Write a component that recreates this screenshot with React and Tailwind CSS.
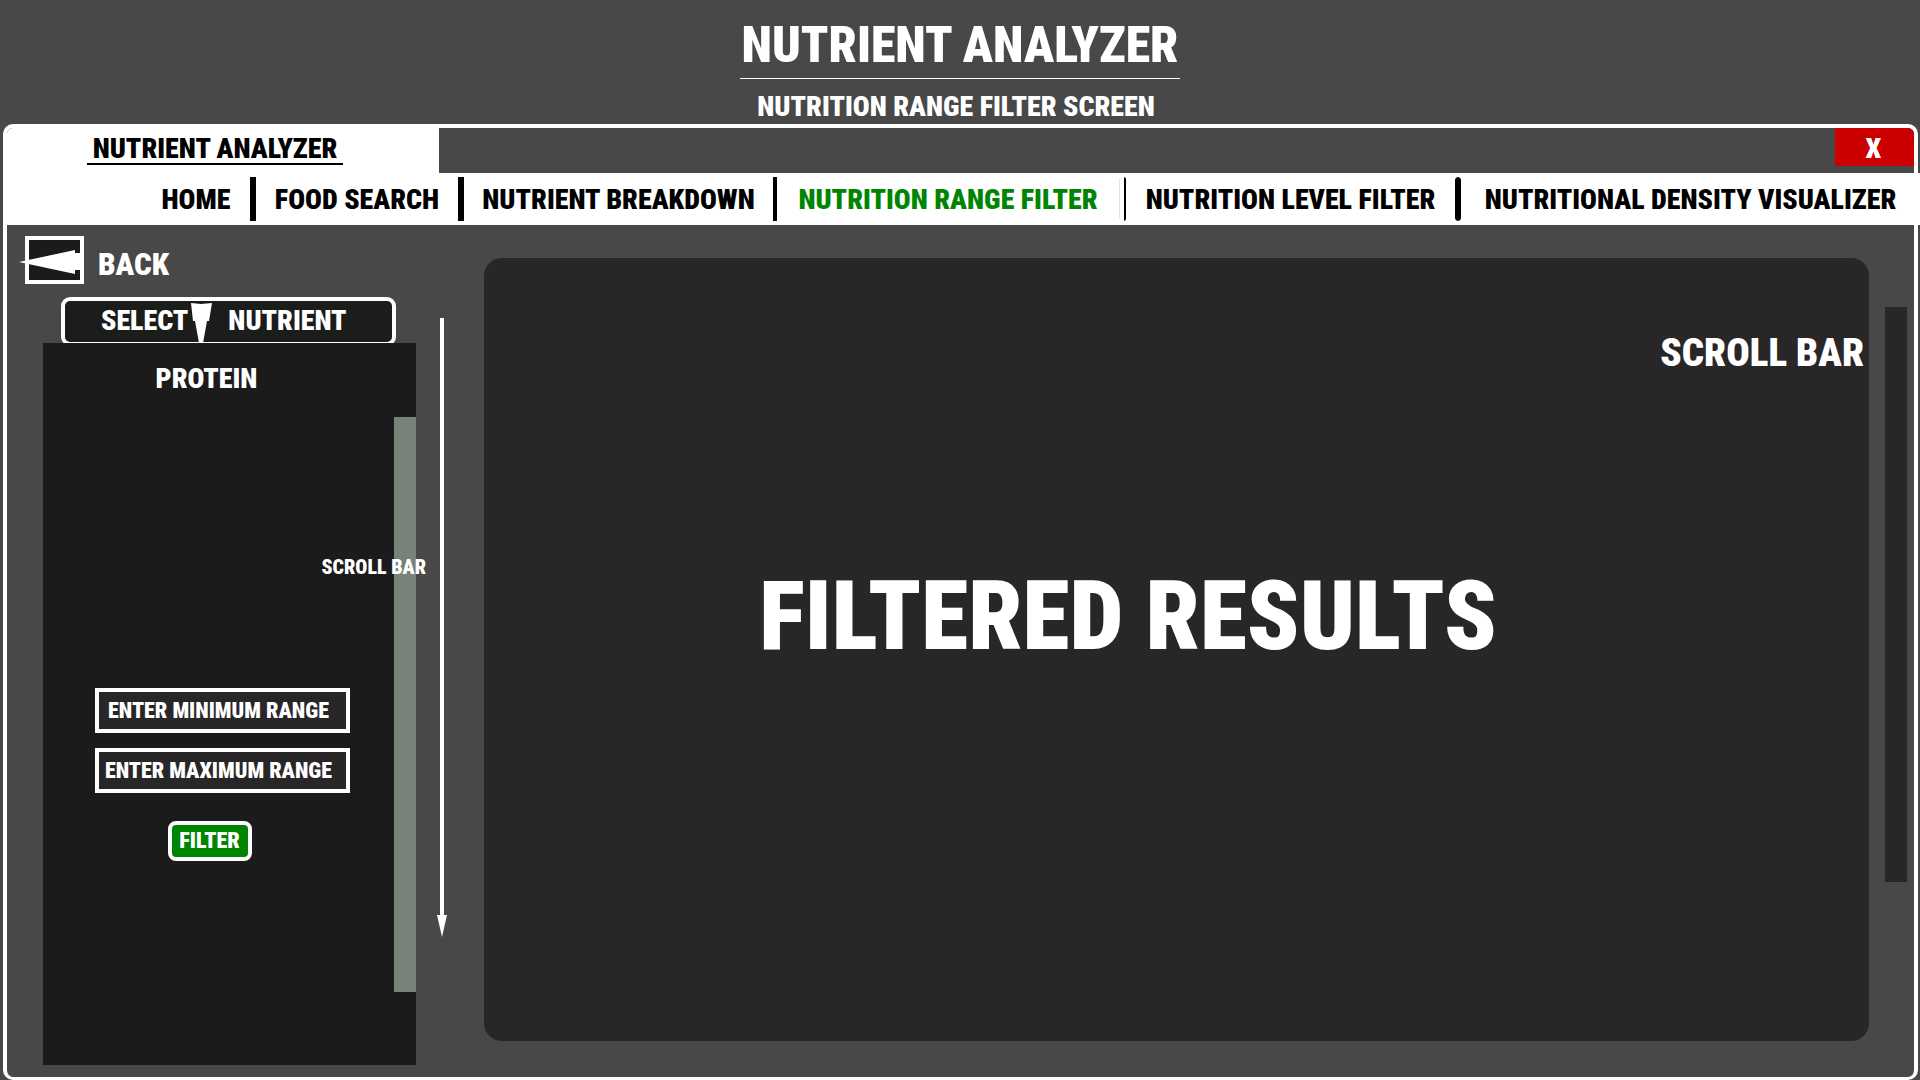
const tabs = [
  { label: "HOME", cell: "flex-[114]", bar: "w-[6px]" },
  { label: "FOOD SEARCH", cell: "flex-[208]", bar: "w-[6px]" },
  { label: "NUTRIENT BREAKDOWN", cell: "flex-[313]", bar: "w-1" },
  { label: "NUTRITION RANGE FILTER", cell: "flex-[349]", bar: "w-[2px] rounded-r-sm", active: true },
  { label: "NUTRITION LEVEL FILTER", cell: "flex-[335]", bar: "w-[6px] rounded-full" },
  { label: "NUTRITIONAL DENSITY VISUALIZER", cell: "flex-[459]" },
];

function PageHeader() {
  return (
    <header className="flex h-[124px] flex-col items-center pt-4">
      <h1 className="border-b border-white px-[2px] pb-1 text-[50px] leading-[58px]">NUTRIENT ANALYZER</h1>
      <h2 className="mt-3 pr-2 text-[28px] leading-8">NUTRITION RANGE FILTER SCREEN</h2>
    </header>
  );
}

function TitleBar() {
  return (
    <div className="flex h-[45px] items-start justify-between">
      <div className="flex h-full w-[432px] justify-center rounded-tl-md bg-white pr-4 pt-[6px] text-black">
        <span className="h-[31px] border-b-2 border-black px-[6px] text-[28px] leading-[29px]">NUTRIENT ANALYZER</span>
      </div>
      <button type="button" aria-label="Close" className="h-[38px] w-[79px] rounded-tr-md bg-[#cc0000] pr-[2px] pt-1 text-[28px] leading-8">
        X
      </button>
    </div>
  );
}

function Navigation() {
  return (
    <nav className="relative -mr-[6px] flex h-[52px] items-center bg-white pl-[135px] text-[28px] text-black">
      {tabs.map((tab) => (
        <div key={tab.label} className={`flex min-w-0 items-center ${tab.cell}`}>
          <a
            href="#"
            aria-current={tab.active ? "page" : undefined}
            className={`flex-1 whitespace-nowrap pt-[2px] text-center ${tab.active ? "text-[#008500]" : ""}`}
          >
            {tab.label}
          </a>
          {tab.active && <span className="mr-[3px] h-10 w-[2px] bg-[#d5ead5]" />}
          {tab.bar && <span className={`h-11 bg-black outline-4 outline-white ${tab.bar}`} />}
        </div>
      ))}
    </nav>
  );
}

function BackButton() {
  return (
    <button type="button" className="mt-[11px] flex h-12 items-start self-start text-[31px]">
      <span className="relative h-12 w-[59px] border-4 border-white bg-[#1b1b1b]">
        <svg className="absolute -left-[10px] top-[9px]" width="62" height="26" viewBox="0 0 62 26" aria-hidden="true">
          <path d="M0 13L56 1V4H61V21H56V25Z" fill="white" />
        </svg>
      </span>
      <span className="ml-[14px] pt-[9px] leading-10">BACK</span>
    </button>
  );
}

function NutrientPanel() {
  return (
    <section className="relative mb-3 ml-[18px] flex flex-1 bg-[#1b1b1b]">
      <div className="flex flex-1 flex-col items-center pt-[18px] pb-[204px]">
        <p className="pr-6 text-[28px] leading-9">PROTEIN</p>
        <form className="mt-auto flex flex-col items-center pl-2" onSubmit={(e) => e.preventDefault()}>
          <input
            aria-label="Enter minimum range"
            placeholder="ENTER MINIMUM RANGE"
            className="h-[45px] w-[255px] border-4 border-white bg-[#282627] pr-2 text-center text-[22px] placeholder:text-white placeholder:opacity-100"
          />
          <input
            aria-label="Enter maximum range"
            placeholder="ENTER MAXIMUM RANGE"
            className="mt-[15px] h-[45px] w-[255px] border-4 border-white bg-[#282627] pr-2 text-center text-[22px] placeholder:text-white placeholder:opacity-100"
          />
          <button type="submit" className="mr-[26px] mt-7 h-10 w-[84px] rounded-lg border-4 border-white bg-[#008500] text-[22px] leading-8">
            FILTER
          </button>
        </form>
      </div>
      <div className="mb-[73px] mt-[74px] w-[22px] bg-[#788278]" />
      <span className="absolute -right-[10px] top-[212px] text-[20px] leading-6">SCROLL BAR</span>
    </section>
  );
}

function Sidebar() {
  return (
    <aside className="flex w-[391px] shrink-0 flex-col">
      <BackButton />
      <button
        type="button"
        aria-haspopup="listbox"
        className="-mb-[3px] ml-9 mt-[13px] flex h-[49px] w-[335px] items-start rounded-[9px] border-4 border-white bg-[#1b1d1b] pl-9 text-[28px] leading-10"
      >
        <span>SELECT</span>
        <svg className="ml-[3px] mr-4 mt-[2px]" width="21" height="40" viewBox="0 0 21 40" aria-hidden="true">
          <path d="M0 0L10 1L21 0L18 18H16L12 40H8L4 18H2Z" fill="white" />
        </svg>
        <span>NUTRIENT</span>
      </button>
      <NutrientPanel />
    </aside>
  );
}

export default function App() {
  return (
    <div className="flex min-h-screen flex-col overflow-x-hidden bg-[#484848] font-['Roboto_Condensed','Roboto',sans-serif] font-black text-white">
      <PageHeader />
      <main className="ml-[3px] mr-[2px] flex flex-1 flex-col rounded-[10px] border-4 border-b-[3px] border-white">
        <TitleBar />
        <Navigation />
        <div className="flex flex-1 pl-[18px]">
          <Sidebar />
          <div className="mb-[140px] ml-[21px] mt-[93px] flex w-[10px] flex-col items-center">
            <span className="w-1 flex-1 bg-white" />
            <svg width="10" height="22" viewBox="0 0 10 22" aria-hidden="true">
              <path d="M0 0H10L5 22Z" fill="white" />
            </svg>
          </div>
          <section className="relative mb-9 ml-[37px] mt-[33px] flex flex-1 items-center justify-center rounded-[18px] bg-[#282627] pb-[68px] pr-[97px]">
            <h2 className="text-center text-[96px] leading-none">FILTERED RESULTS</h2>
            <span className="absolute right-[5px] top-[75px] text-[39px] leading-10">SCROLL BAR</span>
          </section>
          <div className="mb-[195px] ml-4 mr-[7px] mt-[82px] w-[22px] bg-[#282627]" />
        </div>
      </main>
    </div>
  );
}
